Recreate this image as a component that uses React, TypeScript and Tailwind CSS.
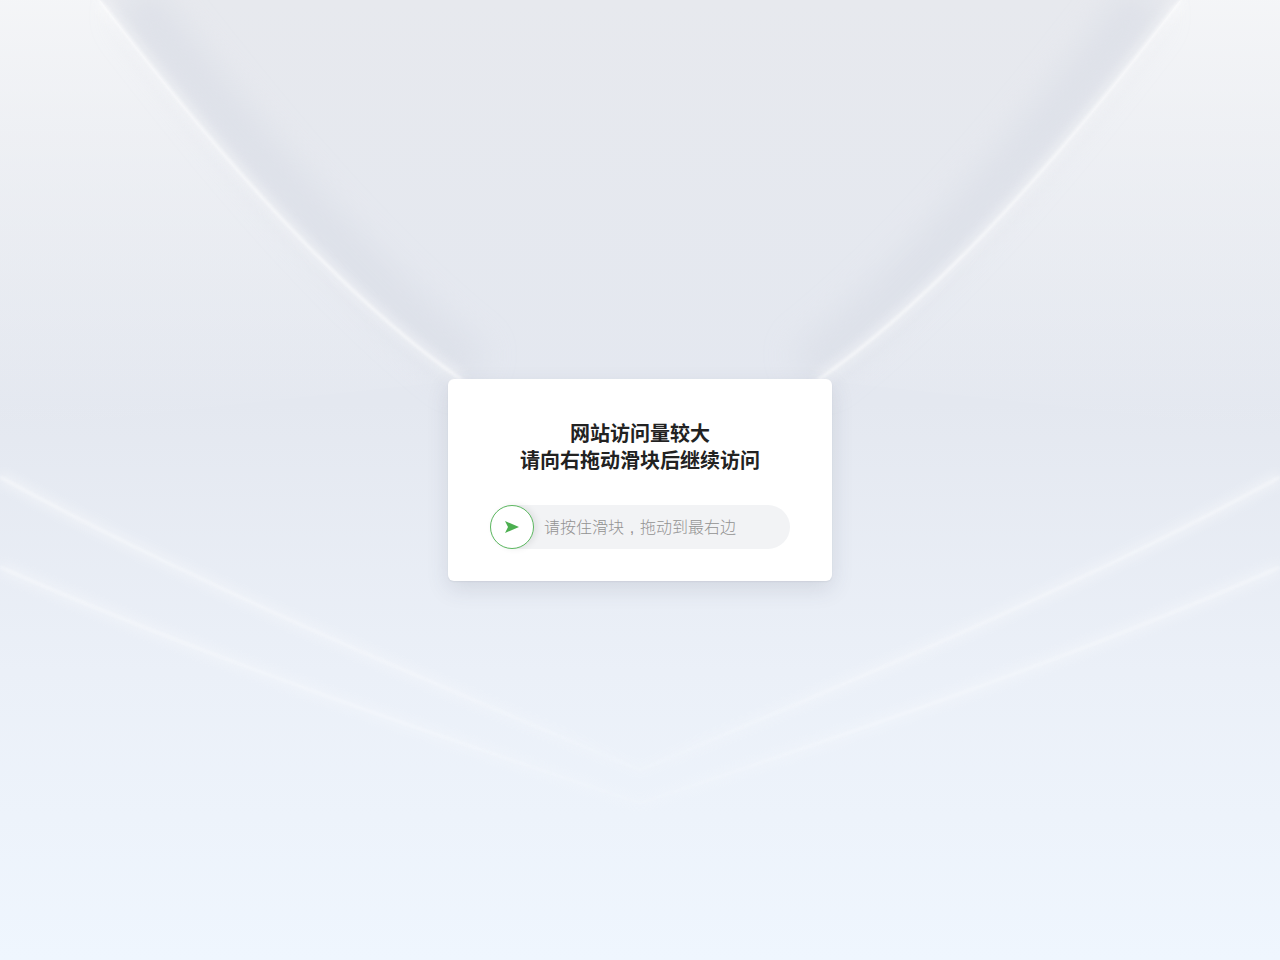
import React from "react";

function Background() {
  const leftV = "M100,0 C190,118 325,285 462,380";
  const rightV = "M1180,0 C1090,118 955,285 818,380";
  const arcA = "M0,477 C210,592 450,690 640,770 C830,690 1070,592 1280,477";
  const arcB = "M0,567 C210,660 450,740 640,803 C830,740 1070,660 1280,567";
  return (
    <svg
      className="absolute inset-0 h-full w-full"
      viewBox="0 0 1280 960"
      preserveAspectRatio="none"
      aria-hidden="true"
    >
      <defs>
        <linearGradient id="base" x1="0" y1="0" x2="0" y2="1">
          <stop offset="0" stopColor="#e7e9ee" />
          <stop offset="0.42" stopColor="#e4e8f0" />
          <stop offset="0.7" stopColor="#ebf0f8" />
          <stop offset="1" stopColor="#eff6fe" />
        </linearGradient>
        <linearGradient id="outer" x1="0" y1="0" x2="0" y2="1">
          <stop offset="0" stopColor="#f5f6f8" stopOpacity="0.95" />
          <stop offset="0.55" stopColor="#f0f2f6" stopOpacity="0.45" />
          <stop offset="1" stopColor="#eef1f6" stopOpacity="0" />
        </linearGradient>
        <linearGradient id="fade" x1="0" y1="0" x2="1280" y2="0" gradientUnits="userSpaceOnUse">
          <stop offset="0" stopColor="#ffffff" stopOpacity="0.9" />
          <stop offset="0.35" stopColor="#ffffff" stopOpacity="0.55" />
          <stop offset="0.5" stopColor="#ffffff" stopOpacity="0.2" />
          <stop offset="0.65" stopColor="#ffffff" stopOpacity="0.55" />
          <stop offset="1" stopColor="#ffffff" stopOpacity="0.9" />
        </linearGradient>
        <filter id="blur6" x="-20%" y="-20%" width="140%" height="140%">
          <feGaussianBlur stdDeviation="6" />
        </filter>
        <filter id="blur2" x="-20%" y="-20%" width="140%" height="140%">
          <feGaussianBlur stdDeviation="1.4" />
        </filter>
        <filter id="blur14" x="-30%" y="-30%" width="160%" height="160%">
          <feGaussianBlur stdDeviation="16" />
        </filter>
      </defs>
      <rect x="0" y="0" width="1280" height="960" fill="url(#base)" />
      <path d="M0,0 L100,0 C190,118 325,285 462,380 L0,430 Z" fill="url(#outer)" />
      <path d="M1280,0 L1180,0 C1090,118 955,285 818,380 L1280,430 Z" fill="url(#outer)" />
      <path d="M135,0 C220,112 345,270 475,370" stroke="#d8dce5" strokeWidth="44" fill="none" opacity="0.6" filter="url(#blur14)" />
      <path d="M1145,0 C1060,112 935,270 805,370" stroke="#d8dce5" strokeWidth="44" fill="none" opacity="0.6" filter="url(#blur14)" />
      <path d={leftV} stroke="#ffffff" strokeWidth="8" fill="none" opacity="0.5" filter="url(#blur6)" />
      <path d={leftV} stroke="#ffffff" strokeWidth="2" fill="none" opacity="0.8" filter="url(#blur2)" />
      <path d={rightV} stroke="#ffffff" strokeWidth="8" fill="none" opacity="0.5" filter="url(#blur6)" />
      <path d={rightV} stroke="#ffffff" strokeWidth="2" fill="none" opacity="0.8" filter="url(#blur2)" />
      <path d={arcA} stroke="url(#fade)" strokeWidth="10" fill="none" opacity="0.45" filter="url(#blur6)" strokeLinejoin="round" />
      <path d={arcA} stroke="url(#fade)" strokeWidth="2" fill="none" opacity="0.6" filter="url(#blur2)" strokeLinejoin="round" />
      <path d={arcB} stroke="url(#fade)" strokeWidth="10" fill="none" opacity="0.4" filter="url(#blur6)" strokeLinejoin="round" />
      <path d={arcB} stroke="url(#fade)" strokeWidth="2" fill="none" opacity="0.5" filter="url(#blur2)" strokeLinejoin="round" />
    </svg>
  );
}

export default function App() {
  return (
    <div
      className="relative flex h-screen w-full items-center justify-center overflow-hidden"
      style={{ fontFamily: '"Noto Sans CJK SC", "Noto Sans", sans-serif' }}
    >
      <Background />
      <div className="relative w-[384px] rounded-[6px] bg-white px-[42px] pb-8 pt-10 shadow-[0_8px_22px_rgba(60,70,90,0.13),0_1px_2px_rgba(0,0,0,0.06)]">
        <h1 className="text-center text-[20px] font-bold leading-[27px] text-[#222222]">
          网站访问量较大
          <br />
          请向右拖动滑块后继续访问
        </h1>
        <div className="mt-8 flex h-[44px] w-[300px] items-center rounded-full bg-[#f2f3f5]">
          <div className="flex h-[44px] w-[44px] shrink-0 items-center justify-center rounded-full border border-[#5cb860] bg-white shadow-[3px_0_6px_rgba(0,0,0,0.08)]">
            <svg width="16" height="14" viewBox="0 0 16 14" aria-hidden="true">
              <path d="M1 1 L15 7 L1 13 L4 7 Z" fill="#4caf50" />
            </svg>
          </div>
          <span className="ml-[10px] flex items-baseline text-[16px] font-light leading-none text-[#929292]">
            请按住滑块
            <span className="inline-block w-[16px] text-center font-['Liberation_Sans',sans-serif]">,</span>
            拖动到最右边
          </span>
        </div>
      </div>
    </div>
  );
}
